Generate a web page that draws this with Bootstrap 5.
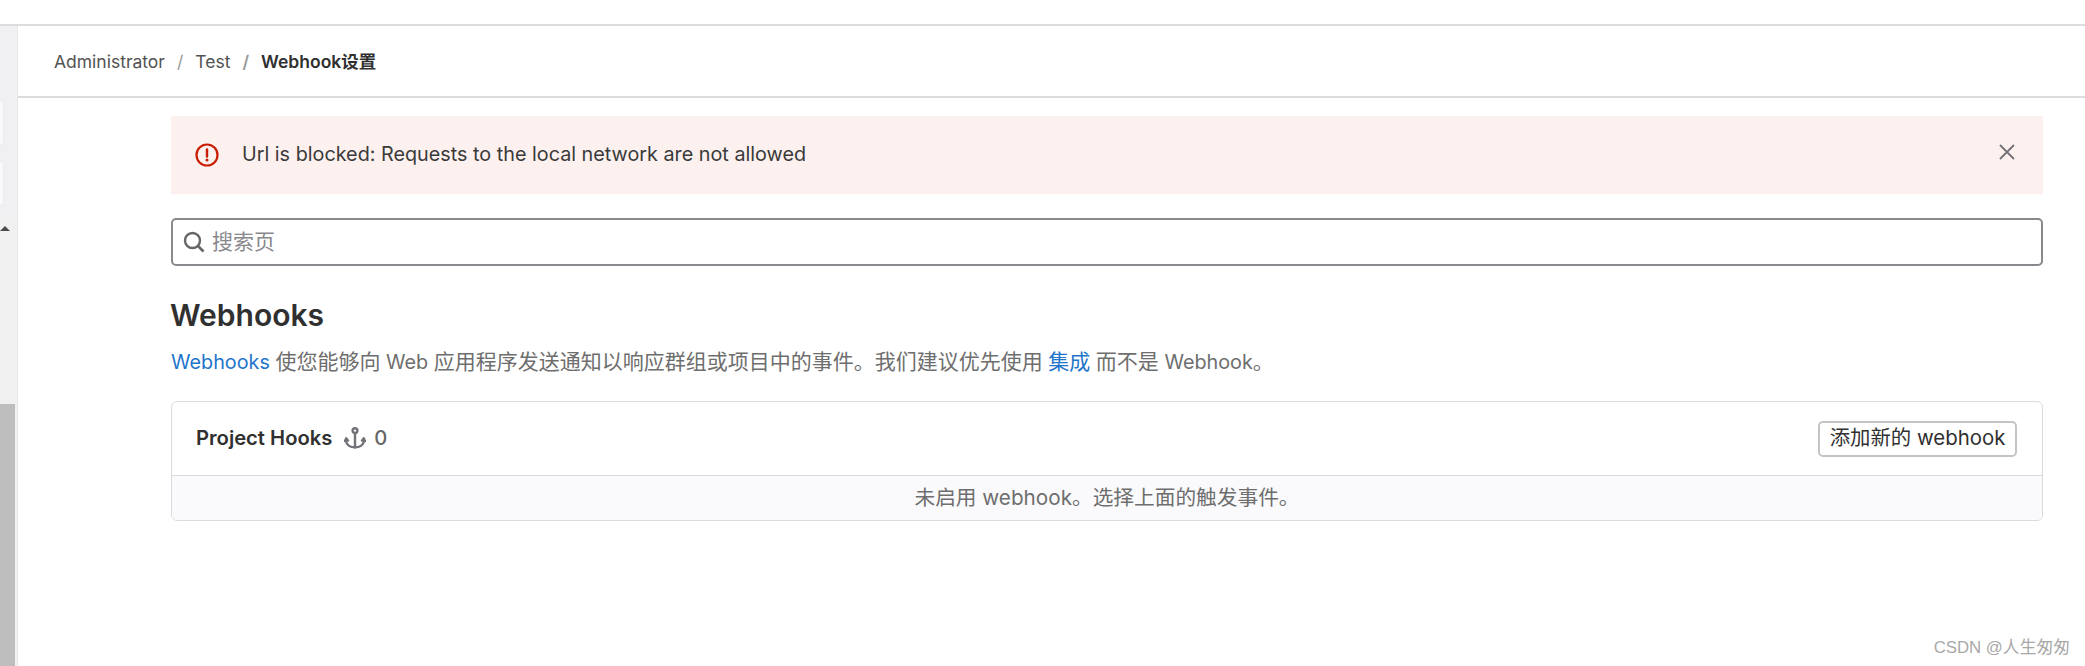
<!DOCTYPE html>
<html>
<head>
  <meta charset="UTF-8">
  <title>Webhook设置</title>
  <link href="https://cdn.jsdelivr.net/npm/bootstrap@5.3.2/dist/css/bootstrap.min.css" rel="stylesheet">
  <style>
    html, body { height: 100%; overflow: hidden; }
    body { font-family: Inter, "Noto Sans CJK SC", sans-serif; color: #303030; background: #fff; }
    .top-strip { height: 26px; border-bottom: 2px solid #dcdcde; flex: none; }
    .page-wrap { height: 640px; }
    .side-rail { width: 18px; flex: none; background: #f0f0f2; border-right: 1px solid #e8e8ea; }
    .rail-items { height: 192px; padding-top: 74px; gap: 16px; }
    .rail-box { width: 4px; height: 45px; background: #f9f9fa; border: 1px solid #ececef; border-left: 0; border-radius: 0 4px 4px 0; }
    .rail-track { background: #f0f0f0; width: 15px; }
    .rail-arrow { height: 186px; padding-top: 8px; }
    .rail-arrow i { display: block; width: 0; height: 0; border-left: 5px solid transparent; border-right: 5px solid transparent; border-bottom: 5px solid #4a4a4a; }
    .rail-thumb { background: #bebebe; }
    .crumb-bar { height: 72px; border-bottom: 2px solid #dcdcde; padding: 2px 0 0 36px; font-size: 17.5px; }
    .crumb-bar .breadcrumb { --bs-breadcrumb-divider-color: #9a9a9a; --bs-breadcrumb-item-padding-x: 12px; }
    .crumb-bar a { color: #525252; text-decoration: none; }
    .crumb-bar .active { color: #303030; font-weight: 600; }
    .main-col { padding: 18px 42px 0 153px; }
    .error-box { height: 78px; background: #fcf1ef; padding: 0 28px 0 24px; font-size: 19.8px; color: #3a3a3a; }
    .error-text { margin-left: 23px; }
    .close-x { line-height: 0; margin-top: -6px; }
    .search-box { height: 48px; margin-top: 24px; border: 2px solid #89888d; border-radius: 5px; padding: 0 10px; font-size: 21px; color: #89888d; }
    .search-box svg { margin-right: 7px; flex: none; }
    .hook-title { font-size: 30px; font-weight: 600; color: #303030; margin: 30px 0 0 -1px; line-height: 38px; }
    .hook-desc { font-size: 19.8px; color: #6e6e6e; margin: 14px 0 0; line-height: 28px; }
    .hook-desc a { color: #1f75cb; text-decoration: none; }
    .zh-text { font-size: 21px; }
    .hook-card { margin-top: 25px; border: 1px solid #dcdcde; border-radius: 6px; overflow: hidden; }
    .hook-head { height: 74px; padding: 0 25px 0 24px; border-bottom: 1px solid #dcdcde; }
    .hook-name { font-size: 20.2px; font-weight: 600; }
    .hook-count { font-size: 20.2px; color: #666; font-weight: 500; margin-left: 12px; }
    .hook-count svg { margin-right: 8px; }
    .add-btn { height: 36px; width: 199px; padding: 0; font-family: Inter, "Noto Sans CJK SC", sans-serif; font-size: 20.4px; color: #303030; background: #fff; border: 2px solid #c4c4c8; border-radius: 5px; line-height: 1; }
    .hook-empty { height: 44px; background: #fafafc; color: #6e6e6e; font-size: 20.7px; }
    .watermark { position: absolute; right: 15px; bottom: 6px; font-size: 16.8px; color: #a8a8a8; font-family: "Liberation Sans", "Noto Sans CJK SC", sans-serif; }
  </style>
</head>
<body class="position-relative">
  <div class="top-strip"></div>
  <div class="page-wrap d-flex">
    <div class="side-rail d-flex flex-column">
      <div class="rail-items d-flex flex-column">
        <div class="rail-box"></div>
        <div class="rail-box"></div>
      </div>
      <div class="rail-track flex-grow-1 d-flex flex-column">
        <div class="rail-arrow"><i></i></div>
        <div class="rail-thumb flex-grow-1"></div>
      </div>
    </div>
    <div class="flex-grow-1">
      <div class="crumb-bar d-flex align-items-center">
        <nav aria-label="breadcrumb">
          <ol class="breadcrumb mb-0">
            <li class="breadcrumb-item"><a href="#">Administrator</a></li>
            <li class="breadcrumb-item"><a href="#">Test</a></li>
            <li class="breadcrumb-item active" aria-current="page">Webhook设置</li>
          </ol>
        </nav>
      </div>
      <div class="main-col">
        <div class="error-box d-flex align-items-center">
          <svg width="24" height="24" viewBox="0 0 24 24" fill="none">
            <circle cx="12" cy="12" r="10.5" stroke="#c91c00" stroke-width="2.2"/>
            <path d="M12 6.5v7" stroke="#c91c00" stroke-width="2.4" stroke-linecap="round"/>
            <circle cx="12" cy="17" r="1.5" fill="#c91c00"/>
          </svg>
          <span class="error-text flex-grow-1">Url is blocked: Requests to the local network are not allowed</span>
          <span class="close-x">
            <svg width="16" height="16" viewBox="0 0 16 16" fill="none"><path d="M1 1l14 14M15 1L1 15" stroke="#737278" stroke-width="1.8"/></svg>
          </span>
        </div>
        <div class="search-box d-flex align-items-center">
          <svg width="22" height="22" viewBox="0 0 22 22" fill="none">
            <circle cx="9.5" cy="9.5" r="7.5" stroke="#666" stroke-width="2.4"/>
            <path d="M15 15l5.5 5.5" stroke="#666" stroke-width="2.6"/>
          </svg>
          <span>搜索页</span>
        </div>
        <h1 class="hook-title">Webhooks</h1>
        <p class="hook-desc"><a href="#">Webhooks</a> <span class="zh-text">使您能够向</span> Web <span class="zh-text">应用程序发送通知以响应群组或项目中的事件。我们建议优先使用</span> <a href="#" class="zh-text">集成</a> <span class="zh-text">而不是</span> Webhook<span class="zh-text">。</span></p>
        <div class="hook-card">
          <div class="hook-head d-flex align-items-center justify-content-between">
            <div class="d-flex align-items-center">
              <span class="hook-name">Project Hooks</span>
              <span class="hook-count d-flex align-items-center">
                <svg width="22" height="22" viewBox="0 0 22 22" fill="none" stroke="#737278" stroke-width="2.4" stroke-linecap="round" stroke-linejoin="round">
                  <circle cx="11" cy="3.6" r="2.4"/>
                  <path d="M11 6.2V20.4"/>
                  <path d="M2.2 11.5v2.5c0 3.8 3.8 6.4 8.8 6.4s8.8-2.6 8.8-6.4v-2.5"/>
                  <path d="M1 14l1.2-2.5L4 13.5M21 14l-1.2-2.5L18 13.5"/>
                </svg>0
              </span>
            </div>
            <button class="add-btn" type="button">添加新的 webhook</button>
          </div>
          <div class="hook-empty d-flex align-items-center justify-content-center">未启用 webhook。选择上面的触发事件。</div>
        </div>
      </div>
    </div>
  </div>
  <div class="watermark">CSDN @人生匆匆</div>
  <script src="https://cdn.jsdelivr.net/npm/bootstrap@5.3.2/dist/js/bootstrap.bundle.min.js"></script>
</body>
</html>
